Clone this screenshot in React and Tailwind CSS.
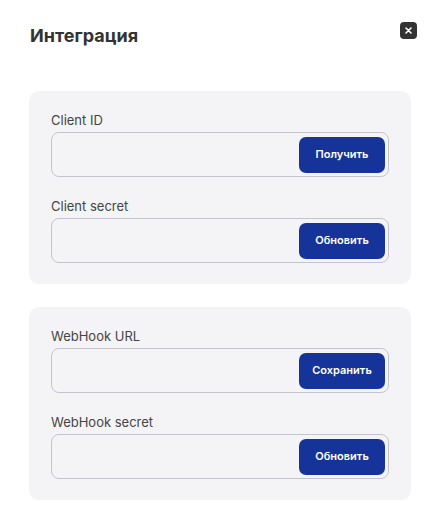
import React from 'react';

const Field = ({ label, action }) => (
    <div className="flex flex-col gap-1">
        <label className="text-[13px] leading-4 text-[#444]">{label}</label>
        <div className="h-[45px] rounded-lg border border-[#c5c4cd] bg-[#f4f4f6] flex items-center justify-end pr-[3px]">
            <button className="w-[86px] h-9 rounded-[7px] bg-[#16339a] text-white text-[11px] font-semibold">
                {action}
            </button>
        </div>
    </div>
);

const App = () => {
    return (
        <div className="w-[435px] h-[522px] bg-white pl-[29px] pr-[24px] pt-[22px] font-['Inter',sans-serif]">
            <div className="flex items-start justify-between">
                <h1 className="text-[18px] leading-7 font-bold text-[#333] ml-[1px]">Интеграция</h1>
                <button className="w-[17px] h-[17px] rounded-[4px] bg-[#333] flex items-center justify-center mr-[-6px]">
                    <svg width="7" height="7" viewBox="0 0 7 7">
                        <path d="M1 1L6 6M6 1L1 6" stroke="white" strokeWidth="1.6" strokeLinecap="round" />
                    </svg>
                </button>
            </div>

            <div className="mt-[41px] flex flex-col gap-[23px]">
                <section className="rounded-[10px] bg-[#f4f4f6] px-[22px] py-[21px] flex flex-col gap-[21px]">
                    <Field label="Client ID" action="Получить" />
                    <Field label="Client secret" action="Обновить" />
                </section>
                <section className="rounded-[10px] bg-[#f4f4f6] px-[22px] py-[21px] flex flex-col gap-[21px]">
                    <Field label="WebHook URL" action="Сохранить" />
                    <Field label="WebHook secret" action="Обновить" />
                </section>
            </div>
        </div>
    );
};

export default App;
